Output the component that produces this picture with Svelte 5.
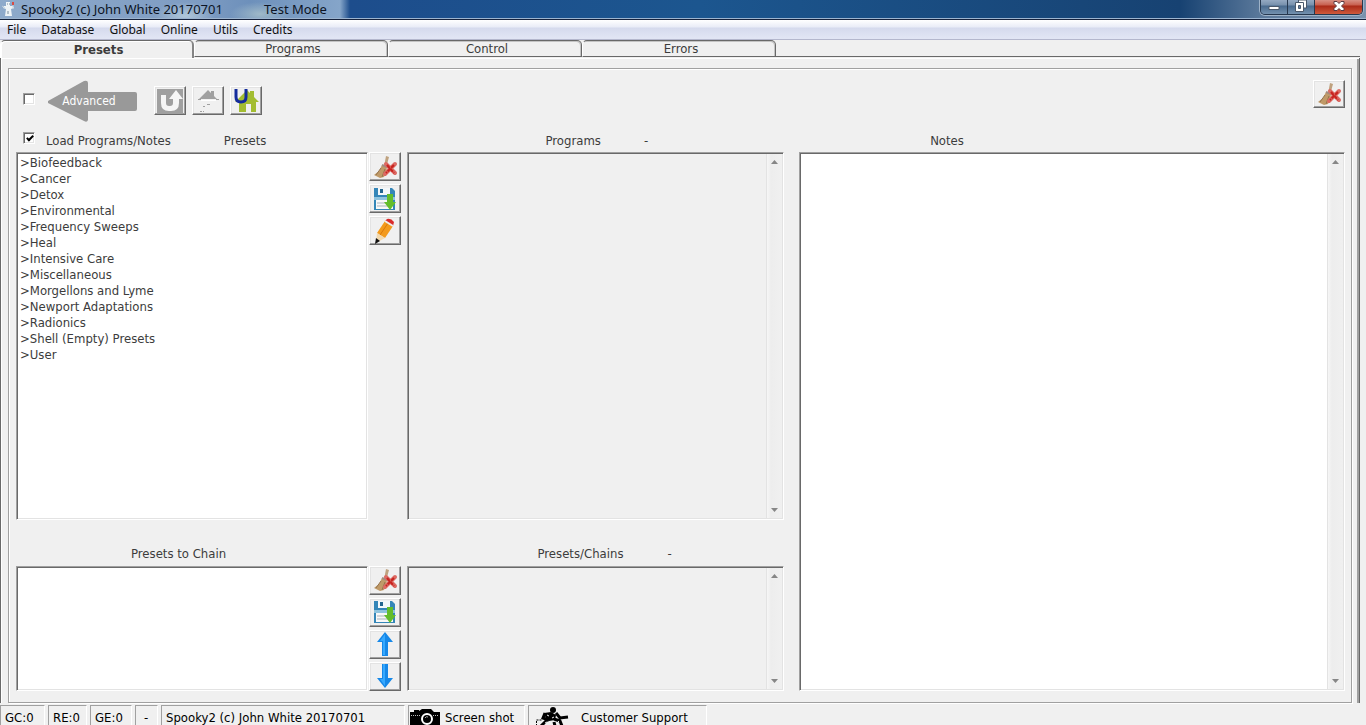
<script lang="ts">
  type Category = {
    id: string;
    name: string;
  };

  const menus = ['File', 'Database', 'Global', 'Online', 'Utils', 'Credits'];
  const tabs = ['Presets', 'Programs', 'Control', 'Errors'];

  const categories: Category[] = [
    { id: 'biofeedback', name: 'Biofeedback' },
    { id: 'cancer', name: 'Cancer' },
    { id: 'detox', name: 'Detox' },
    { id: 'environmental', name: 'Environmental' },
    { id: 'sweeps', name: 'Frequency Sweeps' },
    { id: 'heal', name: 'Heal' },
    { id: 'intensive', name: 'Intensive Care' },
    { id: 'misc', name: 'Miscellaneous' },
    { id: 'morgellons', name: 'Morgellons and Lyme' },
    { id: 'newport', name: 'Newport Adaptations' },
    { id: 'radionics', name: 'Radionics' },
    { id: 'shell', name: 'Shell (Empty) Presets' },
    { id: 'user', name: 'User' },
  ];

  let activeTab = $state('Presets');
  let advanced = $state(false);
  let loadPrograms = $state(true);
  let notes = $state('');
</script>

{#snippet broom()}
  <svg width="26" height="24" viewBox="0 0 26 24" aria-hidden="true">
    <path d="M14 1l3 1-3 11-2-1z" fill="#bfa27f" />
    <path d="M10 10l5 2-1 6-2 4-4 1-6-3 5-4z" fill="#c09a68" />
    <path d="M9 13l-5 7M13 14l-3 8" stroke="#94744f" fill="none" />
    <path d="M10 10l5 2" stroke="#a08c80" stroke-width="2" />
    <path d="M14 9l9 9M23 9l-10 10" stroke="#dc6a63" stroke-width="4" stroke-linecap="round" />
    <path d="M15 10l7 8M22 10l-8 8" stroke="#c8231f" stroke-width="2" stroke-dasharray="4 1" />
  </svg>
{/snippet}

{#snippet disk()}
  <svg width="24" height="24" viewBox="0 0 24 24" aria-hidden="true">
    <path d="M1 1h18l3 3v19H1z" fill="#3486b8" />
    <path d="M5 1h12v7H5z" fill="#f4f8fa" />
    <path d="M7 2h3v4H7z" fill="#24668f" />
    <path d="M1 10h21v3H1z" fill="#8fc3de" />
    <path d="M3 13h17v9H3z" fill="#f8f8f8" />
    <path d="M4 16h11M4 19h11" stroke="#a9b3bb" />
    <path d="M14 7h6v8h3l-6 8-6-8h3z" fill="#63bd2b" />
  </svg>
{/snippet}

{#snippet scrollbar(label: string)}
  <div class="scrollbar">
    <button aria-label="Scroll {label} up" disabled>
      <svg width="7" height="4" viewBox="0 0 7 4"><path d="M0 4L3.500 0L7 4z" fill="#868686" /></svg>
    </button>
    <button aria-label="Scroll {label} down" disabled>
      <svg width="7" height="4" viewBox="0 0 7 4"><path d="M0 0h7L3.500 4z" fill="#868686" /></svg>
    </button>
  </div>
{/snippet}

<div class="window">
  <header class="title-bar">
    <svg class="logo" width="14" height="16" viewBox="0 0 14 16" aria-hidden="true">
      <path d="M5 1h4v4h3l1 2-3 1 1 7H4l1-7-3-1 1-2h2z" fill="#eef3f6" />
      <path d="M1 5l3 2M12 3v5" stroke="#c5d4df" />
      <path d="M12 1v3" stroke="#d84b45" stroke-width="2" />
      <path d="M6 3h1M8 3h1M7 10v3" stroke="#798a99" />
    </svg>
    <span class="app-name">Spooky2 (c) John White 20170701</span>
    <span>Test Mode</span>
    <div class="window-controls">
      <button aria-label="Minimize">
        <svg width="12" height="14" viewBox="0 0 12 14"><path d="M1 6.500h10v3H1z" fill="#fff" stroke="#4a586b" /></svg>
      </button>
      <button aria-label="Restore">
        <svg width="12" height="14" viewBox="0 0 12 14">
          <path d="M3.500 0h8v8h-8z" fill="#fff" stroke="#4a586b" />
          <path d="M.5 2.500h8v9h-8z" fill="#fff" stroke="#4a586b" />
          <path d="M3.500 5.500h2v3h-2z" fill="#6683a3" stroke="#4a586b" />
        </svg>
      </button>
      <button class="close" aria-label="Close">
        <svg width="12" height="14" viewBox="0 0 12 14">
          <path d="M1 1.500h3l2 2 2-2h3v2L8.500 6l2.500 2.500v2H8l-2-2-2 2H1v-2L3.500 6 1 3.500z" fill="#fff" stroke="#5b3a42" />
        </svg>
      </button>
    </div>
  </header>

  <nav class="menu-bar" aria-label="Menu">
    {#each menus as menu}
      <button>{menu}</button>
    {/each}
  </nav>

  <div class="tab-strip" role="tablist">
    {#each tabs as tab}
      <button
        role="tab"
        class:active={activeTab === tab}
        aria-selected={activeTab === tab}
        onclick={() => (activeTab = tab)}
      >
        {tab}
      </button>
    {/each}
  </div>

  <main class="page">
    <div class="group">
      <div class="toolbar">
        <input type="checkbox" aria-label="Advanced" bind:checked={advanced} />
        <button class="advanced" onclick={() => (advanced = !advanced)}>
          <svg width="90" height="42" viewBox="0 0 90 42" aria-hidden="true">
            <path d="M1 21L37 1q4-1 4 2v9h47q2 0 2 2v15q0 2-2 2H41v9q-1 3-4 1L1 23z" fill="#999" />
          </svg>
          <span>Advanced</span>
        </button>
        <div class="nav-buttons">
          <button class="tool" aria-label="Back">
            <svg width="28" height="26" viewBox="0 0 28 26">
              <path d="M1 1h26v24H1z" fill="#a0a0a0" />
              <path d="M5 7h5v8q0 3 3 3h1q3 0 3-3v-4h-4l7-9 7 9h-4v4q0 8-8 8h-2q-8 0-8-8z" fill="#f6f6f6" />
            </svg>
          </button>
          <button class="tool" aria-label="Home">
            <svg width="28" height="26" viewBox="0 0 28 26">
              <path d="M5 11L14 2l3 3V3h3v5l3 3z" fill="#a0a0a0" />
              <path d="M4 11.500h3M22 11.500h3M13 16.500h3M9 18.500h2M6 23.500h2M9 23.500h1" stroke="#a0a0a0" />
              <path d="M7 12.500h15" stroke="#fff" />
            </svg>
          </button>
          <button class="tool" aria-label="User home">
            <svg width="28" height="26" viewBox="0 0 28 26">
              <path d="M3 14L15 2l3 3V3h4v6l5 5h-3v10h-5v-8h-5v8H7V14z" fill="#a3bd31" />
              <path d="M4 1v8q0 5 5 5t5-5V1" fill="none" stroke="#142c9c" stroke-width="3" />
            </svg>
          </button>
        </div>
        <button class="tool clear-all" aria-label="Clear all">{@render broom()}</button>
      </div>

      <div class="panels">
        <div class="caption presets-caption">
          <label><input type="checkbox" bind:checked={loadPrograms} />Load Programs/Notes</label>
          <span>Presets</span>
        </div>
        <div class="caption programs-caption"><span>Programs</span><span>-</span></div>
        <div class="caption notes-caption"><label for="notes">Notes</label></div>

        <select class="sunken presets-list" size="13" aria-label="Presets">
          {#each categories as category (category.id)}
            <option value={category.id}>&gt;{category.name}</option>
          {/each}
        </select>
        <div class="actions">
          <button class="tool" aria-label="Clear preset">{@render broom()}</button>
          <button class="tool" aria-label="Save preset">{@render disk()}</button>
          <button class="tool" aria-label="Edit preset">
            <svg width="24" height="26" viewBox="0 0 24 26" aria-hidden="true">
              <path d="M4 15L12 3l8 5-8 12z" fill="#f39a1c" />
              <path d="M7 17l8-12" stroke="#d9780b" />
              <path d="M12 3l2-2q4-1 7 3l-1 4z" fill="#da2c2c" />
              <path d="M12 3l8 5" stroke="#eee" stroke-width="2" />
              <path d="M4 15l8 5-9 5z" fill="#f3d9ad" />
              <path d="M3 20l4 3-5 3z" fill="#111" />
            </svg>
          </button>
        </div>
        <div class="sunken scroll-box">
          <textarea aria-label="Programs" readonly></textarea>
          {@render scrollbar('programs')}
        </div>

        <div class="sunken scroll-box notes-box">
          <textarea id="notes" bind:value={notes}></textarea>
          {@render scrollbar('notes')}
        </div>

        <div class="caption chain-caption"><span>Presets to Chain</span></div>
        <div class="caption chains-caption"><span>Presets/Chains</span><span>-</span></div>

        <select class="sunken chain-list" size="7" aria-label="Presets to Chain"></select>
        <div class="actions">
          <button class="tool" aria-label="Clear chain">{@render broom()}</button>
          <button class="tool" aria-label="Save chain">{@render disk()}</button>
          <button class="tool" aria-label="Move up">
            <svg width="24" height="24" viewBox="0 0 24 24">
              <path d="M12 0l8 10h-5v14H9V10H4z" fill="#1688e8" />
              <path d="M12 2v21h-2V9H7z" fill="#36a9ff" />
            </svg>
          </button>
          <button class="tool" aria-label="Move down">
            <svg width="24" height="24" viewBox="0 0 24 24">
              <path d="M12 24l8-10h-5V0H9v14H4z" fill="#1688e8" />
              <path d="M12 22V0h-2v15H7z" fill="#36a9ff" />
            </svg>
          </button>
        </div>
        <div class="sunken scroll-box">
          <textarea aria-label="Presets/Chains" readonly></textarea>
          {@render scrollbar('chains')}
        </div>
      </div>
    </div>
  </main>

  <footer class="status-bar">
    <span class="cell gc">GC:0</span>
    <span class="cell re">RE:0</span>
    <span class="cell ge">GE:0</span>
    <span class="cell dash">-</span>
    <span class="cell version">Spooky2 (c) John White 20170701</span>
    <button class="cell shot">
      <svg width="31" height="20" viewBox="0 0 31 20" aria-hidden="true">
        <path d="M1 6h4V4h5v1l3-2h9l3 3h6v14H1z" fill="#000" />
        <path d="M2 9.500h9M24 9.500h6" stroke="#bbb" stroke-dasharray="1 1" />
        <circle cx="18" cy="13" r="5" fill="#000" stroke="#fff" stroke-width="2" />
        <path d="M16 12q1-2 3-1" fill="none" stroke="#aaa" />
      </svg>
      Screen shot
    </button>
    <button class="cell support">
      <svg width="40" height="20" viewBox="0 0 40 20" aria-hidden="true">
        <circle cx="19" cy="4" r="3" fill="#000" />
        <path d="M10 7l7-1 5 3-1 5-6 1-3-2z" fill="#000" />
        <path d="M22 7l4 5 8-1M11 7l-2 5 6 2M20 13l6 2 2 5M14 13l-4 4-3 3M20 16l1 4" fill="none" stroke="#000" stroke-width="3" />
        <path d="M13 9l2 1M18 12l2-1M11 17l2-1M24 15l1 1" stroke="#f0f0f0" />
        <path d="M2.500 20v-6h6" fill="none" stroke="#000" stroke-dasharray="2 1" />
      </svg>
      Customer Support
    </button>
  </footer>
</div>

<style>
  :global(body) {
    background: #f0f0f0;
  }

  .window {
    --face: #f0f0f0;
    --shadow: #a0a0a0;
    --dark: #696969;
    display: flex;
    flex-direction: column;
    height: 100vh;
    overflow: hidden;
    background: var(--face);
    color: #3c3c3c;
    font-family: 'DejaVu Sans Condensed', 'DejaVu Sans', sans-serif;
    font-stretch: condensed;
    font-size: 13px;
    line-height: 16px;
  }

  button,
  input,
  select,
  textarea {
    margin: 0;
    font: inherit;
    color: inherit;
  }

  button {
    padding: 0;
    border: none;
    background: none;
  }

  svg {
    display: block;
    flex: none;
  }

  .title-bar {
    display: flex;
    flex: none;
    align-items: center;
    height: 18px;
    border-bottom: 1px solid #16223c;
    box-shadow: inset 0 -1px #9db5d0;
    background:
      radial-gradient(ellipse 30px 12px at 260px 14px, #9fb9c8, transparent),
      radial-gradient(ellipse 30px 14px at 185px 16px, #b0c7d9, transparent),
      linear-gradient(90deg, #8eaacb 0, #7e9cc2 200px, #6d90bb 250px, #85a5c9 340px, #1d4d8c 350px, #1c568f 700px, #174272 1180px, #5a789a 1260px, #7a92ad 100%);
    color: #0c1424;
    font-family: 'Noto Sans', sans-serif;
    font-stretch: normal;
    padding-bottom: 1px;
  }

  .logo {
    margin: 0 6px 0 1px;
  }

  .app-name {
    width: 243px;
  }

  .window-controls {
    display: flex;
    align-self: flex-start;
    margin: 0 3px 0 auto;
    border: 1px solid #26384f;
    border-top: none;
    border-radius: 0 0 5px 5px;
    box-shadow: 0 0 0 1px #9eb2c8;
    overflow: hidden;
  }

  .window-controls button {
    display: flex;
    justify-content: center;
    width: 27px;
    height: 14px;
    border-right: 1px solid #26384f;
    background: linear-gradient(#94a9c2 0, #7891ad 5px, #496a8e 6px, #7391af 14px);
  }

  .window-controls .close {
    width: 47px;
    border-right: none;
    background: linear-gradient(#d78f84 0, #c8604f 5px, #aa2a18 6px, #cf5a3c 14px);
  }

  .menu-bar {
    display: flex;
    flex: none;
    gap: 15px;
    height: 18px;
    padding: 1px 7px 0;
    box-sizing: content-box;
    border-bottom: 1px solid #b4b7cd;
    background: linear-gradient(#fff 0, #e9ecf7 7px, #d5daed 8px, #e1e5f4 18px);
    color: #111;
    font-family: 'Noto Sans', sans-serif;
    font-stretch: normal;
    font-size: 12px;
  }

  .tab-strip {
    display: flex;
    flex: none;
    height: 18px;
    padding-right: 6px;
    background: linear-gradient(var(--dark), var(--dark)) 0 16px / calc(100% - 6px) 1px no-repeat;
  }

  .tab-strip button {
    box-sizing: border-box;
    width: 194px;
    height: 17px;
    padding: 0 0 1px 4px;
    border: 1px solid var(--dark);
    border-left-color: #fff;
    border-radius: 5px 5px 0 0;
    box-shadow: inset -1px 1px #c4c4c4;
    background: var(--face);
  }

  .tab-strip .active {
    height: 18px;
    padding-bottom: 0;
    border-bottom: none;
    border-right: 2px solid #858585;
    box-shadow: inset 1px 1px #fff;
    font-weight: bold;
  }

  .page {
    display: flex;
    flex: 1;
    min-height: 0;
    margin-right: 6px;
    padding: 10px 7px 0 7px;
    border-left: 1px solid var(--dark);
    border-right: 1px solid var(--dark);
    box-shadow: inset 1px 1px #fff, inset -2px 0 var(--shadow);
  }

  .group {
    display: flex;
    flex: 1;
    flex-direction: column;
    min-width: 0;
    padding: 0 6px 11px 7px;
    border: 1px solid var(--shadow);
    box-shadow: inset 1px 1px #fff, 1px 1px #fff;
  }

  .toolbar {
    box-sizing: border-box;
    display: flex;
    flex: none;
    align-items: flex-start;
    height: 60px;
    padding: 11px 0 0 7px;
  }

  .toolbar > input {
    margin-top: 13px;
  }

  input[type='checkbox'] {
    box-sizing: border-box;
    flex: none;
    appearance: none;
    width: 12px;
    height: 12px;
    border: 1px solid;
    border-color: var(--shadow) #fff #fff var(--shadow);
    box-shadow: inset 1px 1px var(--dark), inset -1px -1px #e3e3e3;
    background: #fff;
  }

  input[type='checkbox']:checked::after {
    content: '';
    display: block;
    width: 2px;
    height: 5px;
    margin: 1px 0 0 4px;
    border: solid #000;
    border-width: 0 2px 2px 0;
    transform: rotate(45deg);
  }

  .advanced {
    display: grid;
    align-items: center;
    margin-left: 12px;
    color: #fff;
    font-size: 12px;
  }

  .advanced > * {
    grid-area: 1 / 1;
  }

  .advanced span {
    padding-right: 6px;
  }

  .nav-buttons {
    display: flex;
    gap: 6px;
    padding: 6px 0 0 17px;
  }

  .tool {
    box-sizing: border-box;
    display: flex;
    align-items: center;
    justify-content: center;
    width: 32px;
    height: 29px;
    border: 1px solid;
    border-color: #fff var(--dark) var(--dark) #fff;
    box-shadow: inset -1px -1px var(--shadow), inset 1px 1px #e3e3e3;
    background: var(--face);
  }

  .tool:active {
    border-color: var(--dark) #fff #fff var(--dark);
  }

  .clear-all {
    height: 28px;
    margin-left: auto;
  }

  .panels {
    display: grid;
    flex: 1;
    grid-template-columns: 351fr 39px 377fr 560fr;
    grid-template-rows: 23px 367fr 46px 125fr;
    grid-template-areas:
      'a a b c'
      'd e f n'
      'g g h n'
      'i j k n';
    min-height: 0;
  }

  .caption {
    display: flex;
  }

  .caption label {
    display: flex;
    gap: 11px;
  }

  .presets-caption {
    grid-area: a;
    gap: 53px;
    padding-left: 7px;
  }

  .programs-caption {
    gap: 43px;
    padding-left: 139px;
  }

  .notes-caption {
    padding-left: 146px;
  }

  .presets-caption,
  .programs-caption,
  .notes-caption {
    padding-top: 4px;
  }

  .presets-caption input {
    margin-top: -1px;
  }

  .chain-caption {
    grid-area: g;
    padding: 26px 0 0 115px;
  }

  .chains-caption {
    grid-area: h;
    gap: 44px;
    padding: 26px 0 0 131px;
  }

  .sunken {
    box-sizing: border-box;
    min-width: 0;
    min-height: 0;
    padding: 1px;
    border: 1px solid;
    border-color: var(--shadow) #fff #fff var(--shadow);
    border-radius: 0;
    box-shadow: inset 1px 1px var(--dark), inset -1px -1px #e3e3e3;
    background: var(--face);
  }

  select.sunken {
    width: 100%;
    height: 100%;
    padding-top: 2px;
    outline: none;
    overflow: hidden;
    background: #fff;
  }

  option {
    min-height: 16px;
    padding: 0 2px;
    line-height: 16px;
  }

  .presets-list {
    grid-area: d;
  }

  .chain-list {
    grid-area: i;
  }

  .actions {
    display: flex;
    flex-direction: column;
    gap: 3px;
    padding-left: 1px;
  }

  .scroll-box {
    display: flex;
  }

  .scroll-box textarea {
    flex: 1;
    min-width: 0;
    padding: 2px 3px;
    border: none;
    outline: none;
    resize: none;
    background: none;
  }

  .notes-box {
    grid-area: n;
    margin-left: 15px;
    background: #fff;
  }

  .scrollbar {
    display: flex;
    flex: none;
    flex-direction: column;
    justify-content: space-between;
    width: 15px;
    border-left: 1px solid #e3e3e3;
    background: linear-gradient(90deg, #f6f6f6, #ededed 4px, #f0f0f0);
  }

  .scrollbar button {
    display: flex;
    align-items: center;
    justify-content: center;
    height: 16px;
  }

  .status-bar {
    display: flex;
    flex: none;
    gap: 3px;
    height: 20px;
    margin-top: 2px;
    overflow: hidden;
    color: #000;
  }

  .cell {
    box-sizing: border-box;
    display: flex;
    flex: none;
    align-items: flex-start;
    height: 24px;
    padding: 4px 0 0 4px;
    border: 1px solid;
    border-color: var(--shadow) #fff #fff var(--shadow);
    white-space: nowrap;
  }

  .gc {
    width: 45px;
  }

  .re {
    width: 39px;
  }

  .ge {
    width: 42px;
  }

  .dash {
    width: 23px;
    padding-left: 8px;
  }

  .version {
    width: 244px;
  }

  .shot {
    gap: 5px;
    width: 117px;
    padding-left: 0;
  }

  .support {
    gap: 7px;
    width: 179px;
    padding-left: 5px;
  }

  .cell svg {
    margin-top: -4px;
  }
</style>
